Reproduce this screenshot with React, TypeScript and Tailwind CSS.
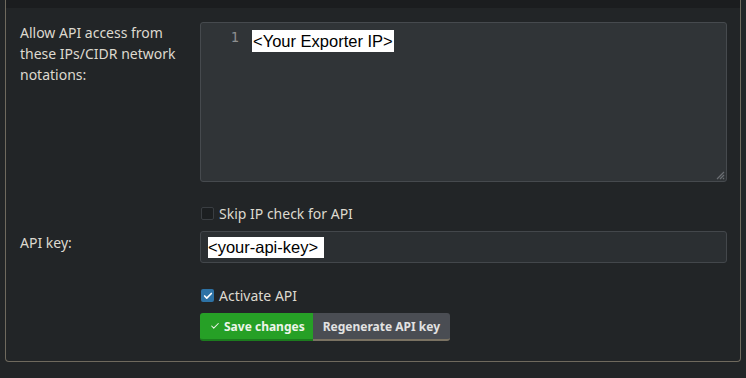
import { Check } from 'lucide-react';

function CheckBox({ checked }: { checked: boolean }) {
  return checked ? (
    <span className="flex h-[13px] w-[13px] items-center justify-center rounded-[2px] bg-[#2d72a5]">
      <Check size={10} strokeWidth={4} className="text-white" />
    </span>
  ) : (
    <span className="h-[13px] w-[13px] rounded-[2px] border border-[#3a3e42] bg-[#1c1f21]" />
  );
}

export default function App() {
  return (
    <div className="h-[378px] w-[746px] bg-[#222527] px-[5px] font-['Noto_Sans',sans-serif] text-[14px] leading-[21px] text-[#ddd9cf]">
      <div className="rounded-b-[4px] border border-t-0 border-[#6f6a5e] pb-[20px]">
        <div className="h-[8px] bg-[#1b1d1f]" />

        <div className="grid grid-cols-[180px_1fr] pl-[14px] pr-[13px] pt-[14px]">
          {/* allow list */}
          <div className="pr-2">Allow API access from these IPs/CIDR network notations:</div>
          <div className="relative flex h-[160px] rounded-[3px] border border-[#464a4e] bg-[#303437]">
            <div className="w-[38px] pt-[4px] text-right font-['DejaVu_Sans_Mono',monospace] text-[13.5px] text-[#8d8f90]">
              1
            </div>
            <div className="pl-[13px] pt-[7px]">
              <span className="inline-block bg-white px-[1px] font-['Liberation_Sans',sans-serif] text-[16.5px] leading-[22px] text-black">
                &lt;Your Exporter IP&gt;
              </span>
            </div>
            <svg className="absolute bottom-[1px] right-[1px]" width="9" height="9" viewBox="0 0 9 9">
              <path d="M8 1L1 8M8 4L4 8M8 7L7 8" stroke="#6a6e72" strokeWidth="1.2" />
            </svg>
          </div>

          {/* skip ip */}
          <div />
          <label className="mt-[21px] flex items-center gap-[5px] pl-[1px]">
            <CheckBox checked={false} />
            Skip IP check for API
          </label>

          {/* api key */}
          <div className="mt-[7px] pt-[1px]">API key:</div>
          <div className="mt-[7px] flex h-[32px] items-center rounded-[3px] border border-[#43474b] bg-[#2b2f32] pl-[7px]">
            <span className="bg-white pr-[6px] font-['Liberation_Sans',sans-serif] text-[16.5px] leading-[21px] text-black">
              &lt;your-api-key&gt;
            </span>
          </div>

          {/* activate */}
          <div />
          <label className="mt-[22px] flex items-center gap-[5px] pl-[1px]">
            <CheckBox checked={true} />
            Activate API
          </label>

          <div />
          <div className="mt-[7px] flex">
            <button className="flex h-[28px] items-center gap-[4px] rounded-l-[3px] border-b-2 border-[#1c7c1e] bg-[#26a026] pl-[10px] pr-[8px] text-[12px] font-bold text-[#eef5ea]">
              <Check size={10} strokeWidth={2.5} />
              Save changes
            </button>
            <button className="flex h-[28px] items-center rounded-r-[3px] border-b-2 border-[#7a7262] bg-[#4a4d53] px-[10px] text-[12px] font-bold text-[#e2e2e2]">
              Regenerate API key
            </button>
          </div>
        </div>
      </div>
    </div>
  );
}
